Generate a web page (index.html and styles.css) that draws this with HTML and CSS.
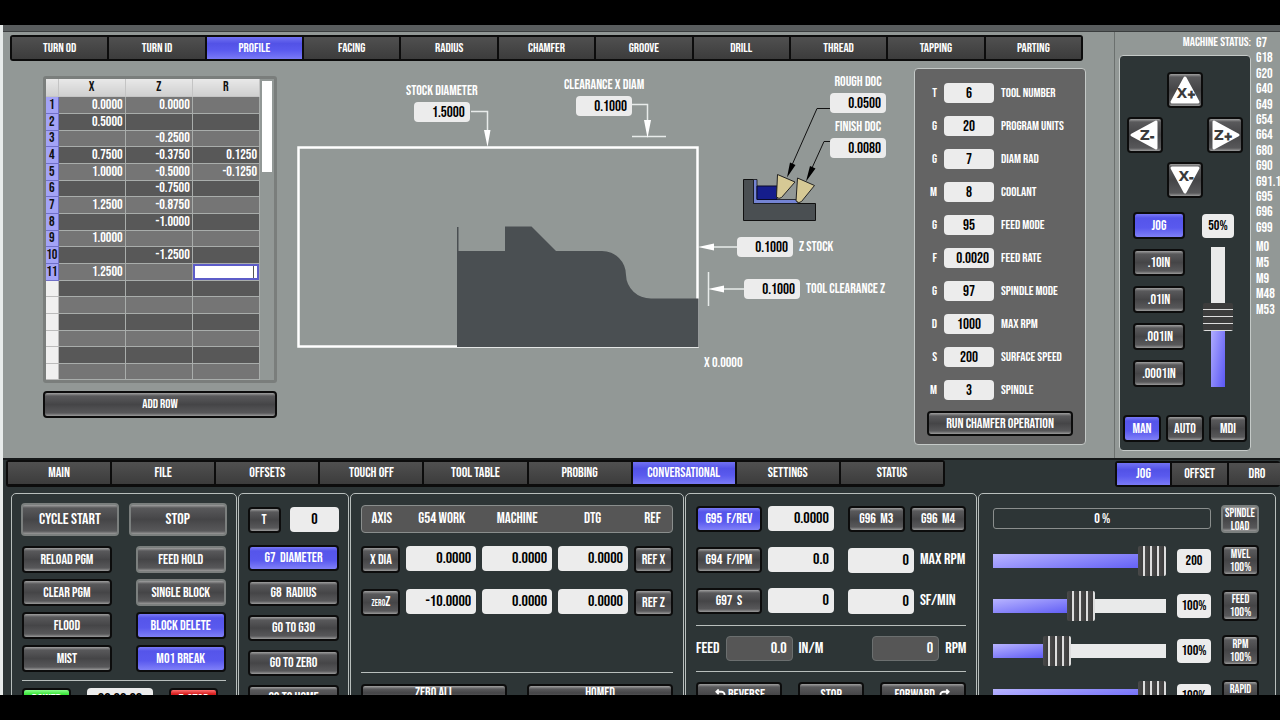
FILE: index.html
```
<!DOCTYPE html>
<html lang="en">
<head>
    <meta charset="UTF-8">
    <meta name="viewport" content="width=device-width, initial-scale=1.0">
    <title>Lathe Conversational</title>
    <link rel="stylesheet" href="styles.css">
</head>
<body>
<div class="screen">
    <div class="titlebar"></div>

    <div class="upper">
        <main class="conversational">
            <nav class="tabs op-tabs">
                <button>TURN OD</button>
                <button>TURN ID</button>
                <button class="active">PROFILE</button>
                <button>FACING</button>
                <button>RADIUS</button>
                <button>CHAMFER</button>
                <button>GROOVE</button>
                <button>DRILL</button>
                <button>THREAD</button>
                <button>TAPPING</button>
                <button>PARTING</button>
            </nav>

            <div class="workspace">
                <section class="points">
                    <div class="points-frame">
                        <table class="points-table">
                            <thead>
                            <tr><th></th><th>X</th><th>Z</th><th>R</th></tr>
                            </thead>
                            <tbody>
                            <tr><th>1</th><td>0.0000</td><td>0.0000</td><td></td></tr>
                            <tr><th>2</th><td>0.5000</td><td></td><td></td></tr>
                            <tr><th>3</th><td></td><td>-0.2500</td><td></td></tr>
                            <tr><th>4</th><td>0.7500</td><td>-0.3750</td><td>0.1250</td></tr>
                            <tr><th>5</th><td>1.0000</td><td>-0.5000</td><td>-0.1250</td></tr>
                            <tr><th>6</th><td></td><td>-0.7500</td><td></td></tr>
                            <tr><th>7</th><td>1.2500</td><td>-0.8750</td><td></td></tr>
                            <tr><th>8</th><td></td><td>-1.0000</td><td></td></tr>
                            <tr><th>9</th><td>1.0000</td><td></td><td></td></tr>
                            <tr><th>10</th><td></td><td>-1.2500</td><td></td></tr>
                            <tr><th>11</th><td>1.2500</td><td></td><td class="editing"><input type="text" aria-label="Row 11 R"></td></tr>
                            <tr class="empty"><th></th><td></td><td></td><td></td></tr>
                            <tr class="empty"><th></th><td></td><td></td><td></td></tr>
                            <tr class="empty"><th></th><td></td><td></td><td></td></tr>
                            <tr class="empty"><th></th><td></td><td></td><td></td></tr>
                            <tr class="empty"><th></th><td></td><td></td><td></td></tr>
                            <tr class="empty"><th></th><td></td><td></td><td></td></tr>
                            </tbody>
                        </table>
                        <div class="scrollbar"><div class="scroll-thumb"></div></div>
                    </div>
                    <button class="btn add-row">ADD ROW</button>
                </section>

                <section class="diagram">
                    <svg width="610" height="320" viewBox="0 0 610 320">
                        <!-- stock and finished profile -->
                        <rect x="8.5" y="87.5" width="399" height="199" fill="none" stroke="#fff" stroke-width="2.5"/>
                        <path d="M167 167h1.500v24H215v-24.500h26.500L266 191h46a24 24 0 0 1 24 24a25 24 0 0 0 25 23.500h47.500V287H167z" fill="#4a4f52"/>
                        <!-- dimension arrows -->
                        <g fill="none" stroke="#e8ebea" stroke-width="1.500">
                            <path d="M181 51.500h16.500V72M342 44.500h15.500V62M342 76.500h34M420 187h28M418.500 212v34M430 229h24"/>
                        </g>
                        <path d="M194 70h6.500L197.500 87zM354 60h7L357.500 78zM408 187l16-3.500v7zM418 229l16-3.500v7z" fill="#fff"/>
                        <!-- depth of cut tool sketch -->
                        <path d="M453.500 119.500h10v24h62v17h-72z" fill="#4a4f52" stroke="#111"/>
                        <path d="M463.500 119.500h3.500v20h43l-3 4h-43.500z" fill="#7484d4" stroke="#111" stroke-width=".8"/>
                        <path d="M467 126h20v13.500h-20z" fill="#151d8c" stroke="#0a0a28"/>
                        <path d="M487.500 114.500L505 122L491.500 137.500Q489 139.500 486.500 137z" fill="#d6c995" stroke="#222"/>
                        <path d="M507.500 118L524.500 125.500L511.500 141.500Q509 144 506 141z" fill="#d6c995" stroke="#222"/>
                        <path d="M540 48.500H527L502 105M540 81.500H534L522 108" fill="none" stroke="#111"/>
                        <path d="M497 117.500L500 102.500L505.500 105zM516 121.500L520 106L525.500 108.500z" fill="#000"/>
                    </svg>
                    <label class="dim stock-diam">STOCK DIAMETER<input type="text" value="1.5000"></label>
                    <label class="dim clear-x">CLEARANCE X DIAM<input type="text" value="0.1000"></label>
                    <label class="dim rough">ROUGH DOC<input type="text" value="0.0500"></label>
                    <label class="dim finish">FINISH DOC<input type="text" value="0.0080"></label>
                    <label class="dim side z-stock"><input type="text" value="0.1000">Z STOCK</label>
                    <label class="dim side clear-z"><input type="text" value="0.1000">TOOL CLEARANCE Z</label>
                    <span class="x-pos">X 0.0000</span>
                </section>

                <section class="params">
                    <label><span>T</span><input type="text" value="6">TOOL NUMBER</label>
                    <label><span>G</span><input type="text" value="20">PROGRAM UNITS</label>
                    <label><span>G</span><input type="text" value="7">DIAM RAD</label>
                    <label><span>M</span><input type="text" value="8">COOLANT</label>
                    <label><span>G</span><input type="text" value="95">FEED MODE</label>
                    <label><span>F</span><input type="text" class="right" value="0.0020">FEED RATE</label>
                    <label><span>G</span><input type="text" value="97">SPINDLE MODE</label>
                    <label><span>D</span><input type="text" value="1000">MAX RPM</label>
                    <label><span>S</span><input type="text" value="200">SURFACE SPEED</label>
                    <label><span>M</span><input type="text" value="3">SPINDLE</label>
                    <button class="btn">RUN CHAMFER OPERATION</button>
                </section>
            </div>
        </main>

        <aside class="sidebar">
            <div class="jog-column">
                <div class="status-label">MACHINE STATUS:</div>
                <div class="jog-panel">
                    <div class="jog-pad">
                        <button class="btn x-plus" aria-label="X plus">
                            <svg viewBox="0 0 32 32"><path d="M16 4L29 28H3z"/><text x="17" y="24">X<tspan>+</tspan></text></svg>
                        </button>
                        <button class="btn z-minus" aria-label="Z minus">
                            <svg viewBox="0 0 32 32"><path d="M3 16L27 3V29z"/><text x="18" y="21">Z<tspan>-</tspan></text></svg>
                        </button>
                        <button class="btn z-plus" aria-label="Z plus">
                            <svg viewBox="0 0 32 32"><path d="M29 16L5 3V29z"/><text x="14" y="21">Z<tspan>+</tspan></text></svg>
                        </button>
                        <button class="btn x-minus" aria-label="X minus">
                            <svg viewBox="0 0 32 32"><path d="M16 28L3 4H29z"/><text x="17" y="17">X<tspan>-</tspan></text></svg>
                        </button>
                    </div>
                    <div class="jog-controls">
                        <div class="jog-steps">
                            <button class="btn active">JOG</button>
                            <button class="btn">.10IN</button>
                            <button class="btn">.01IN</button>
                            <button class="btn">.001IN</button>
                            <button class="btn">.0001IN</button>
                        </div>
                        <div class="jog-speed">
                            <output class="readout">50%</output>
                            <input type="range" class="slider vertical" aria-label="Jog speed" value="50" style="--fill: 50%">
                        </div>
                    </div>
                    <div class="modes">
                        <button class="btn active">MAN</button>
                        <button class="btn">AUTO</button>
                        <button class="btn">MDI</button>
                    </div>
                </div>
            </div>
            <div class="codes">
                <ul class="g-codes">
                    <li>G7</li><li>G18</li><li>G20</li><li>G40</li><li>G49</li><li>G54</li><li>G64</li>
                    <li>G80</li><li>G90</li><li>G91.1</li><li>G95</li><li>G96</li><li>G99</li>
                </ul>
                <ul class="m-codes">
                    <li>M0</li><li>M5</li><li>M9</li><li>M48</li><li>M53</li>
                </ul>
            </div>
        </aside>
    </div>

    <div class="lower">
        <div class="lower-tabs">
            <nav class="tabs main-tabs">
                <button>MAIN</button>
                <button>FILE</button>
                <button>OFFSETS</button>
                <button>TOUCH OFF</button>
                <button>TOOL TABLE</button>
                <button>PROBING</button>
                <button class="active">CONVERSATIONAL</button>
                <button>SETTINGS</button>
                <button>STATUS</button>
            </nav>
            <nav class="tabs side-tabs">
                <button class="active">JOG</button>
                <button>OFFSET</button>
                <button>DRO</button>
            </nav>
        </div>

        <div class="panels">
            <section class="panel">
                <div class="pair big">
                    <button class="btn grey">CYCLE START</button>
                    <button class="btn grey">STOP</button>
                </div>
                <div class="pair cycle">
                    <button class="btn">RELOAD PGM</button>
                    <button class="btn grey">FEED HOLD</button>
                    <button class="btn">CLEAR PGM</button>
                    <button class="btn grey">SINGLE BLOCK</button>
                    <button class="btn">FLOOD</button>
                    <button class="btn active">BLOCK DELETE</button>
                    <button class="btn">MIST</button>
                    <button class="btn active">M01 BREAK</button>
                </div>
                <hr>
                <div class="power-row">
                    <button class="btn green">POWER</button>
                    <output class="readout timer">00:00:00</output>
                    <button class="btn red">E-STOP</button>
                </div>
            </section>

            <section class="panel tool-panel">
                <div class="tool-row">
                    <button class="btn">T</button>
                    <input type="text" class="field center" aria-label="Tool" value="0">
                </div>
                <button class="btn active">G7&nbsp; DIAMETER</button>
                <button class="btn">G8&nbsp; RADIUS</button>
                <button class="btn">GO TO G30</button>
                <button class="btn">GO TO ZERO</button>
                <button class="btn">GO TO HOME</button>
            </section>

            <section class="panel dro-panel">
                <table class="dro">
                    <thead>
                    <tr><th>AXIS</th><th>G54 WORK</th><th>MACHINE</th><th>DTG</th><th>REF</th></tr>
                    </thead>
                    <tbody>
                    <tr>
                        <td><button class="btn">X DIA</button></td>
                        <td><input type="text" class="field" aria-label="X work" value="0.0000"></td>
                        <td><input type="text" class="field" aria-label="X machine" value="0.0000"></td>
                        <td><input type="text" class="field" aria-label="X distance to go" value="0.0000"></td>
                        <td><button class="btn">REF X</button></td>
                    </tr>
                    <tr>
                        <td><button class="btn"><small>ZERO</small>Z</button></td>
                        <td><input type="text" class="field" aria-label="Z work" value="-10.0000"></td>
                        <td><input type="text" class="field" aria-label="Z machine" value="0.0000"></td>
                        <td><input type="text" class="field" aria-label="Z distance to go" value="0.0000"></td>
                        <td><button class="btn">REF Z</button></td>
                    </tr>
                    </tbody>
                </table>
                <hr>
                <div class="dro-actions">
                    <button class="btn">ZERO ALL</button>
                    <button class="btn">HOMED</button>
                </div>
            </section>

            <section class="panel spindle-panel">
                <div class="spindle-grid">
                    <button class="btn active">G95&nbsp; F/REV</button>
                    <input type="text" class="field" aria-label="Feed per rev" value="0.0000">
                    <div class="css-buttons">
                        <button class="btn">G96&nbsp; M3</button>
                        <button class="btn">G96&nbsp; M4</button>
                    </div>
                    <button class="btn">G94&nbsp; F/IPM</button>
                    <input type="text" class="field" aria-label="Feed per minute" value="0.0">
                    <label class="unit"><input type="text" class="field" value="0">MAX RPM</label>
                    <button class="btn">G97&nbsp; S</button>
                    <input type="text" class="field" aria-label="Spindle speed" value="0">
                    <label class="unit"><input type="text" class="field" value="0">SF/MIN</label>
                </div>
                <hr>
                <div class="actuals">
                    <label>FEED<input type="text" class="field dim-field" value="0.0" readonly>IN/M</label>
                    <label><input type="text" class="field dim-field" value="0" readonly>RPM</label>
                </div>
                <hr>
                <div class="spindle-actions">
                    <button class="btn">
                        <svg viewBox="0 0 12 12"><path d="M2 3h5a3.500 3.500 0 0 1 0 7H5M4 .5L1.500 3L4 5.500"/></svg>REVERSE
                    </button>
                    <button class="btn">STOP</button>
                    <button class="btn">FORWARD
                        <svg viewBox="0 0 12 12"><path d="M9.500 3H5a3.500 3.500 0 0 0 0 7h2M8 .5L10.500 3L8 5.500"/></svg>
                    </button>
                </div>
            </section>

            <section class="panel override-panel">
                <div class="load-row">
                    <div class="load-bar" role="progressbar" aria-valuenow="0" aria-label="Spindle load">0 %</div>
                    <button class="btn grey two-line">SPINDLE<br>LOAD</button>
                </div>
                <div class="override">
                    <input type="range" class="slider" aria-label="Max velocity" value="100" style="--fill: 100%">
                    <output class="readout">200</output>
                    <button class="btn two-line">MVEL<br>100%</button>
                </div>
                <div class="override">
                    <input type="range" class="slider" aria-label="Feed override" value="51" style="--fill: 51%">
                    <output class="readout">100%</output>
                    <button class="btn two-line">FEED<br>100%</button>
                </div>
                <div class="override">
                    <input type="range" class="slider" aria-label="RPM override" value="34" style="--fill: 34%">
                    <output class="readout">100%</output>
                    <button class="btn two-line">RPM<br>100%</button>
                </div>
                <div class="override">
                    <input type="range" class="slider" aria-label="Rapid override" value="100" style="--fill: 100%">
                    <output class="readout">100%</output>
                    <button class="btn two-line">RAPID<br>100%</button>
                </div>
            </section>
        </div>
    </div>
</div>
</body>
</html>
```
FILE: styles.css
```
* {
    box-sizing: border-box;
}
body {
    margin: 0;
    padding: 25px 0;
    height: 100vh;
    overflow: hidden;
    background-color: #000;
    color: #fff;
    font-family: "Bebas Neue", "Roboto Condensed", "Liberation Sans Narrow", "Liberation Sans", sans-serif;
    font-size: 13px;
    line-height: 14px;
}
button, input, output {
    font: inherit;
    color: inherit;
}
button {
    padding: 0;
    white-space: nowrap;
}
ul {
    list-style: none;
    margin: 0;
    padding: 0;
}
hr {
    margin: 0;
    border: 0;
    border-top: 1px solid #b9bfbd;
}
.screen {
    height: 100%;
    overflow: hidden;
    border-left: 3px solid #e8eceb;
    background-color: #2d3536;
}
.titlebar {
    height: 7px;
    background-color: #595d5e;
    border-bottom: 1px solid #3a3d3e;
}

/* buttons */
.btn {
    border: 2px solid #0c0c0c;
    border-radius: 4px;
    background: linear-gradient(#a0a0a0, #59595b 3px, #454547 50%, #58585a calc(100% - 3px), #9a9a9a);
    color: #fff;
}
.btn.active {
    background: linear-gradient(#7a7af6, #5555ea 4px, #5959ee 60%, #8080f8);
}
.btn.grey {
    border-color: #7b7f7e;
}
.btn.green {
    background: linear-gradient(#8cff8c, #3fe83f 4px, #25b825);
}
.btn.red {
    background: linear-gradient(#ff7070, #d81f1f 4px, #a81010);
}
.btn.two-line {
    font-size: 12px;
    line-height: 13px;
}

/* fields */
.field, .dim input, .params input {
    height: 20px;
    min-width: 0;
    padding: 0 5px;
    border: 0;
    border-radius: 4px;
    background-color: #ececec;
    color: #000;
    font-size: 15px;
    text-align: right;
}
.field {
    width: 100%;
    height: 25px;
    font-size: 16px;
}
.field.center {
    text-align: center;
}
.field.dim-field {
    background-color: #565656;
    border: 1px solid #6b6f6f;
    color: #fff;
}
.readout {
    display: block;
    border-radius: 4px;
    background-color: #ececec;
    color: #000;
    height: 24px;
    font-size: 14px;
    line-height: 24px;
    text-align: center;
}

/* tabs */
.tabs {
    display: grid;
    grid-auto-flow: column;
    grid-auto-columns: 1fr;
    gap: 2px;
    padding: 2px;
    border-radius: 3px;
    background-color: #0c0c0c;
}
.tabs button {
    height: 22px;
    border: 0;
    background: linear-gradient(#505050, #3c3c3c);
}
.tabs .active {
    background: linear-gradient(#7272f2, #5252e6 30%, #5a5aee 60%, #7a7af6);
}

/* upper half */
.upper {
    display: grid;
    grid-template-columns: minmax(0, 1fr) 165px;
    background-color: #929896;
    border-bottom: 2px solid #16191a;
}
.conversational {
    padding: 3px 28px 12px 7px;
    border-right: 1px solid #6b706e;
}
.op-tabs {
    margin-right: 3px;
}
.workspace {
    display: grid;
    grid-template-columns: 234px 611px 172px;
    justify-content: space-between;
    align-items: start;
    padding: 7px 0 0 33px;
}
.points {
    padding-top: 8px;
}
.points-frame {
    display: grid;
    grid-template-columns: 1fr 14px;
    align-items: start;
    border: 3px solid #7a7e7c;
    border-radius: 3px;
}
.points-table {
    width: 100%;
    table-layout: fixed;
    border-collapse: collapse;
    font-size: 14px;
    line-height: 14px;
}
.points-table th, .points-table td {
    height: 17px;
    padding: 0 2px;
    border: 1px solid #a9adab;
    border-width: 0 1px 1px 0;
    font-weight: normal;
    text-align: right;
}
.points-table tbody tr:nth-child(3n) > *, .points-table tbody tr:last-child > * {
    height: 16px;
}
.points-table th:first-child {
    width: 12px;
    padding: 0;
    border-color: #7070c8;
    background-color: #a3a3f6;
    color: #111;
    text-align: center;
}
.points-table thead th, .points-table thead th:first-child {
    border-color: #c4c4c4;
    background: linear-gradient(#e8e8e8, #cfcfcf);
    color: #111;
    text-align: center;
}
.points-table .empty th:first-child {
    border-color: #bbb;
    background: #f0f0f0;
}
.points-table tbody tr {
    background-color: #757575;
}
.points-table tbody tr:nth-child(even) {
    background-color: #585858;
}
.points-table .editing {
    padding: 0;
}
.editing input {
    display: block;
    width: 100%;
    height: 16px;
    padding: 0;
    border: 2px solid #5c5cc8;
    background-color: #fff;
    background-image: linear-gradient(#555, #555);
    background-repeat: no-repeat;
    background-size: 1px 100%;
    background-position: right 3px top;
}
.scrollbar {
    padding: 2px 2px 0;
}
.scroll-thumb {
    height: 91px;
    background-color: #fff;
}
.add-row {
    width: 100%;
    height: 27px;
    margin-top: 8px;
}

/* profile drawing, labels sit on the canvas */
.diagram {
    position: relative;
    height: 320px;
    margin-top: -8px;
    font-size: 14px;
}
.dim {
    position: absolute;
    display: flex;
    flex-direction: column;
    align-items: center;
    gap: 4px;
    white-space: nowrap;
}
.dim input {
    width: 56px;
}
.dim.side {
    flex-direction: row;
    gap: 6px;
}
.stock-diam {
    left: 116px;
    top: 24px;
}
.clear-x {
    left: 274px;
    top: 18px;
}
.rough {
    left: 540px;
    top: 15px;
}
.finish {
    left: 540px;
    top: 60px;
}
.z-stock {
    left: 447px;
    top: 177px;
}
.clear-z {
    left: 454px;
    top: 219px;
}
.x-pos {
    position: absolute;
    left: 414px;
    top: 296px;
}

.params {
    display: flex;
    flex-direction: column;
    gap: 13px;
    padding: 14px 12px 8px;
    border: 1px solid #c4c9c7;
    border-radius: 4px;
    background-color: #646464;
}
.params label {
    display: grid;
    grid-template-columns: 10px 50px 1fr;
    gap: 7px;
    align-items: center;
    white-space: nowrap;
}
.params span {
    text-align: right;
}
.params input {
    text-align: center;
}
.params .right {
    text-align: right;
}
.params .btn {
    height: 25px;
    margin-top: -2px;
    font-size: 14px;
}

/* sidebar */
.sidebar {
    display: grid;
    grid-template-columns: 132px 1fr;
    gap: 5px;
    padding: 3px 0 7px 4px;
    overflow: hidden;
}
.status-label {
    height: 20px;
    line-height: 15px;
    text-align: right;
}
.jog-panel {
    padding: 16px 3px 8px;
    border: 1px solid #c4c9c7;
    border-radius: 4px;
    background-color: #2d3536;
}
.jog-pad {
    display: grid;
    grid-template-columns: repeat(3, 36px);
    grid-template-rows: repeat(3, 36px);
    gap: 9px 4px;
    justify-content: center;
}
.jog-pad svg {
    display: block;
    width: 100%;
}
.jog-pad path {
    fill: #fff;
    stroke: #fff;
    stroke-width: 3;
    stroke-linejoin: round;
}
.jog-pad text {
    font: bold 14px "DejaVu Sans", sans-serif;
    fill: #3b3b3b;
    text-anchor: middle;
}
.jog-pad tspan {
    font-size: 10px;
    stroke: #3b3b3b;
    stroke-width: 1;
}
.x-plus, .x-minus {
    grid-column: 2;
}
.x-plus {
    grid-row: 1;
}
.z-minus, .z-plus {
    grid-row: 2;
}
.z-minus {
    grid-column: 1;
}
.z-plus {
    grid-column: 3;
}
.x-minus {
    grid-row: 3;
}
.jog-controls {
    display: flex;
    justify-content: space-between;
    padding: 14px 13px 0 10px;
}
.jog-steps {
    display: grid;
    grid-template-columns: 52px;
    gap: 10px;
}
.jog-steps .btn {
    height: 27px;
    font-size: 14px;
}
.jog-speed {
    display: flex;
    flex-direction: column;
    align-items: center;
    gap: 9px;
    padding-top: 2px;
}
.jog-speed .readout {
    width: 32px;
}
.modes {
    display: grid;
    grid-template-columns: repeat(3, 1fr);
    gap: 5px;
    padding-top: 28px;
}
.modes .btn {
    height: 27px;
    font-size: 14px;
}
.codes {
    font-size: 14px;
    line-height: 15px;
}
.codes ul {
    display: grid;
    align-content: space-between;
}
.g-codes {
    height: 200px;
}
.m-codes {
    height: 78px;
    margin-top: 4px;
}

/* sliders */
.slider {
    appearance: none;
    width: 100%;
    height: 30px;
    margin: 0;
    background: none;
}
.slider::-webkit-slider-runnable-track {
    height: 14px;
    background: linear-gradient(170deg, #b8b4ff, #5a57f5) no-repeat left / var(--fill) 100%, #e9eaea;
}
.slider::-webkit-slider-thumb {
    appearance: none;
    width: 28px;
    height: 30px;
    margin-top: -8px;
    border-radius: 2px;
    background: repeating-linear-gradient(90deg, #4a4a4a 0, #3c3c3c 5px, #ddd 5px 7px);
}
.slider.vertical {
    writing-mode: vertical-lr;
    direction: rtl;
    width: 30px;
    height: 140px;
}
.slider.vertical::-webkit-slider-runnable-track {
    width: 14px;
    height: 100%;
    background: linear-gradient(100deg, #b8b4ff, #5a57f5) no-repeat bottom / 100% var(--fill), #e9eaea;
}
.slider.vertical::-webkit-slider-thumb {
    width: 30px;
    height: 28px;
    margin: 0 0 0 -8px;
    background: repeating-linear-gradient(#3c3c3c 0 6px, #ddd 6px 7px);
}

/* lower half */
.lower {
    font-size: 14px;
}
.lower-tabs {
    display: grid;
    grid-template-columns: minmax(0, 1fr) 165px;
    padding-left: 3px;
}
.main-tabs {
    max-width: 939px;
}
.side-tabs {
    grid-auto-columns: auto;
    grid-template-columns: 53px 55px 56px;
    margin-top: 1px;
}
.panels {
    display: grid;
    grid-template-columns: 226fr 112fr 334fr 293fr 298fr;
    gap: 1px;
    padding: 6px 4px 0 8px;
}
.panel {
    min-width: 0;
    height: 240px;
    padding: 11px 10px;
    border: 1px solid #b9bfbd;
    border-radius: 5px;
}
.pair {
    display: grid;
    grid-template-columns: 1fr 1fr;
    gap: 6px 24px;
}
.pair.big {
    gap: 10px;
    margin: -2px -1px 10px;
}
.pair.big .btn {
    height: 33px;
    font-size: 16px;
}
.pair.cycle .btn {
    height: 27px;
}
.pair.cycle {
    padding-bottom: 8px;
}
.power-row {
    display: grid;
    grid-template-columns: 49px 66px 49px;
    gap: 16px;
    padding-top: 7px;
}
.power-row .btn {
    height: 23px;
}
.timer {
    font-size: 16px;
}

.tool-panel {
    display: grid;
    grid-template-rows: 29px;
    grid-auto-rows: 26px;
    gap: 9px;
    padding: 13px 9px;
}
.tool-row {
    display: grid;
    grid-template-columns: 33px 1fr;
    gap: 9px;
    height: 26px;
}

.dro {
    display: block;
}
.dro thead, .dro tbody {
    display: block;
}
.dro tr {
    display: grid;
    grid-template-columns: 39fr 70fr 70fr 70fr 39fr;
    gap: 6px;
    margin-bottom: 16px;
}
.dro thead tr {
    align-items: center;
    height: 28px;
    margin-bottom: 13px;
    border: 1px solid #8a8e8d;
    border-radius: 4px;
    background-color: #565656;
}
.dro th, .dro td {
    padding: 0;
    font-weight: normal;
    text-align: center;
}
.dro th {
    font-size: 15px;
}
.dro .btn {
    width: 100%;
    height: 27px;
}
.dro small {
    font-size: 9px;
}
.dro-panel hr {
    margin-top: 56px;
}
.dro-actions {
    display: grid;
    grid-template-columns: 1fr 1fr;
    gap: 20px;
    padding-top: 11px;
}

.spindle-panel {
    padding: 12px 10px;
}
.spindle-grid {
    display: grid;
    grid-template-columns: 66px 66px 1fr;
    gap: 15px 6px;
    padding-bottom: 11px;
}
.spindle-panel .btn {
    height: 26px;
}
.css-buttons {
    display: grid;
    grid-template-columns: 1fr 1fr;
    gap: 5px;
    padding-left: 8px;
}
.unit {
    display: grid;
    grid-template-columns: 66px 1fr;
    gap: 6px;
    align-items: center;
    padding-left: 8px;
    font-size: 16px;
    white-space: nowrap;
}
.actuals {
    display: flex;
    justify-content: space-between;
    padding: 10px 0;
    font-size: 16px;
}
.actuals label {
    display: flex;
    align-items: center;
    gap: 6px;
}
.actuals .field {
    width: 67px;
}
.spindle-actions {
    display: grid;
    grid-template-columns: 86fr 66fr 86fr;
    gap: 16px;
    padding-top: 10px;
}
.spindle-actions svg {
    width: 11px;
    height: 11px;
    margin: 0 2px;
    vertical-align: middle;
    fill: none;
    stroke: #fff;
    stroke-width: 2;
}

.override-panel {
    display: grid;
    grid-template-rows: 26px;
    grid-auto-rows: 31px;
    gap: 14px;
    padding: 11px 16px 11px 14px;
}
.load-row {
    display: grid;
    grid-template-columns: 1fr 38px;
    gap: 10px;
    align-items: start;
}
.load-row .btn {
    height: 28px;
}
.load-bar {
    height: 21px;
    margin-top: 3px;
    border: 1px solid #8a8e8d;
    border-radius: 3px;
    line-height: 19px;
    text-align: center;
}
.override {
    display: grid;
    grid-template-columns: 1fr 34px 37px;
    align-items: center;
    column-gap: 11px;
}
.override .btn {
    height: 31px;
}
```
